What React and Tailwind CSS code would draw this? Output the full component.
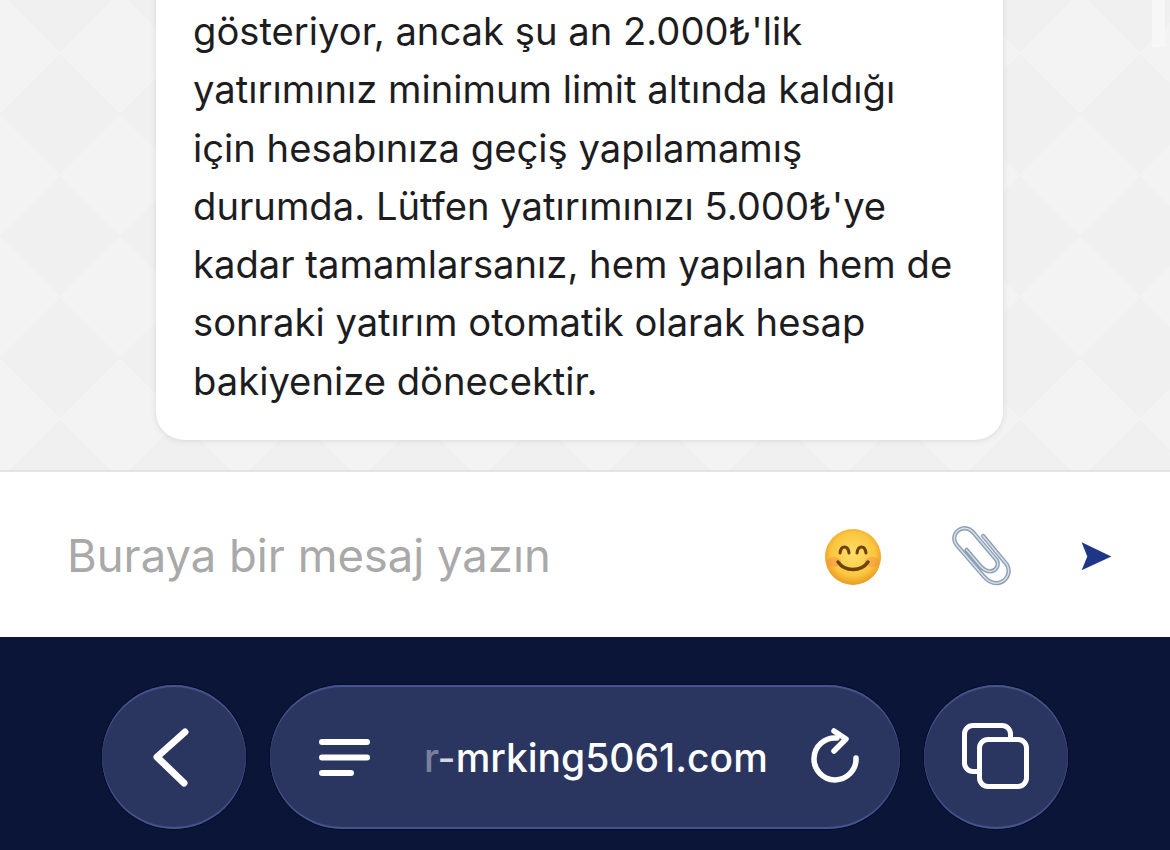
import React from 'react';

const LINES = [
  "gösteriyor, ancak şu an 2.000₺'lik",
  'yatırımınız minimum limit altında kaldığı',
  'için hesabınıza geçiş yapılamamış',
  "durumda. Lütfen yatırımınızı 5.000₺'ye",
  'kadar tamamlarsanız, hem yapılan hem de',
  'sonraki yatırım otomatik olarak hesap',
  'bakiyenize dönecektir.',
];

function Smiley() {
  return (
    <svg width="60" height="60" viewBox="0 0 60 60" className="shrink-0">
      <defs>
        <radialGradient id="face" cx="50%" cy="45%" r="55%">
          <stop offset="0%" stopColor="#ffdf6b" />
          <stop offset="70%" stopColor="#fcc63f" />
          <stop offset="100%" stopColor="#e89a22" />
        </radialGradient>
      </defs>
      <circle cx="30" cy="30" r="28" fill="url(#face)" />
      <ellipse cx="11" cy="35" rx="7" ry="5" fill="#f58a4a" opacity="0.45" />
      <ellipse cx="49" cy="35" rx="7" ry="5" fill="#f58a4a" opacity="0.45" />
      <path d="M17 26 C18 18 25 18 26 26" fill="none" stroke="#6b4210" strokeWidth="3" strokeLinecap="round" />
      <path d="M34 26 C35 18 42 18 43 26" fill="none" stroke="#6b4210" strokeWidth="3" strokeLinecap="round" />
      <path d="M15 35 C22 45 38 45 45 35" fill="none" stroke="#6b4210" strokeWidth="3.4" strokeLinecap="round" />
    </svg>
  );
}

function Paperclip() {
  const d = 'M610 108 L682 195 C695 220 680 245 655 250 C640 252 625 245 612 230 L530 135 C515 115 525 90 550 85 C565 83 575 90 585 103 L650 180 C660 195 650 213 632 215 C620 215 610 208 600 197 L560 150';
  return (
    <svg width="63" height="63" viewBox="510 75 190 190" className="shrink-0">
      <path d={d} fill="none" stroke="#8e9fb5" strokeWidth="13" strokeLinecap="round" strokeLinejoin="round" />
      <path d={d} fill="none" stroke="#d6dfe9" strokeWidth="4.5" strokeLinecap="round" strokeLinejoin="round" />
    </svg>
  );
}

function Composer() {
  return (
    <div className="flex h-[165px] shrink-0 items-center bg-white pl-[67px] pt-[4px]">
      <input
        readOnly
        placeholder="Buraya bir mesaj yazın"
        className="w-[756px] bg-transparent text-[45.400px] text-[#333] outline-none placeholder:text-[#a9a9a9]"
      />
      <div className="flex items-center">
        <Smiley />
        <div className="ml-[67px]">
          <Paperclip />
        </div>
        <svg width="33" height="33" viewBox="900 120 100 100" className="ml-[67px] shrink-0">
          <path d="M905 127 L995 170 L905 212 L922 170 Z" fill="#1f3688" />
        </svg>
      </div>
    </div>
  );
}

const glass = 'h-[144px] shrink-0 items-center bg-[#2a3560] shadow-[0_0_0_1px_#060c25,inset_0_2px_1px_#47568f,inset_0_-2px_1px_#47568f]';

function BrowserBar() {
  return (
    <div className="flex flex-1 gap-[24px] bg-[#0b1538] pl-[102px] pt-[48px]">
      <div className={`flex w-[144px] justify-center rounded-full ${glass}`}>
        <svg width="48" height="64" viewBox="150 725 48 64">
          <path d="M185 732 L157 757 L184 783" fill="none" stroke="#fff" strokeWidth="7" strokeLinecap="round" strokeLinejoin="round" />
        </svg>
      </div>

      <div className={`flex w-[630px] rounded-full pl-[49px] ${glass}`}>
        <svg width="52" height="40" viewBox="319 737 52 40" className="shrink-0">
          <path d="M322 742 H367 M322 757.500 H367 M322 773 H351" fill="none" stroke="#fff" strokeWidth="6" strokeLinecap="round" />
        </svg>
        <span className="ml-[53px] mt-[2px] font-['Inter',sans-serif] text-[39px] font-medium text-white">
          <span className="text-white/40">r</span>
          <span className="text-white/80">-</span>
          mrking5061.com
        </span>
        <svg width="50" height="60" viewBox="810 727 50 60" className="ml-[43px] shrink-0">
          <path d="M855 758 A21 21 0 1 1 836 738" fill="none" stroke="#fff" strokeWidth="5.500" strokeLinecap="round" />
          <path d="M833 731 L845 739 L833 751" fill="none" stroke="#fff" strokeWidth="5.500" strokeLinecap="round" strokeLinejoin="round" />
        </svg>
      </div>

      <div className={`flex w-[144px] justify-center rounded-full ${glass}`}>
        <svg width="72" height="72" viewBox="960 722 72 72">
          <path d="M977 772.500 H973 A8.500 8.500 0 0 1 964.500 764 V735 A8.500 8.500 0 0 1 973 726.500 H1002 A8.500 8.500 0 0 1 1010.500 735 V740" fill="none" stroke="#fff" strokeWidth="5" strokeLinecap="round" />
          <rect x="979.500" y="740.500" width="47" height="47" rx="8.500" fill="none" stroke="#fff" strokeWidth="5" />
        </svg>
      </div>
    </div>
  );
}

export default function App() {
  return (
    <div className="flex h-[850px] w-[1170px] flex-col overflow-hidden font-['Inter',sans-serif]">
      <div className="relative flex h-[472px] shrink-0 flex-col justify-end border-b-2 border-[#e4e4e4] bg-[linear-gradient(135deg,#f0f0f0_25%,transparent_25%),linear-gradient(225deg,#f0f0f0_25%,transparent_25%),linear-gradient(45deg,#f0f0f0_25%,transparent_25%),linear-gradient(315deg,#f0f0f0_25%,#f3f3f3_25%)] bg-size-[120px_122px] bg-position-[-60px_-8px] pb-[30px] pl-[156px]">
        <div className="absolute right-[5px] top-0 h-[47px] w-[13px] bg-[#f7f7f7]" />
        <div className="w-[847px] shrink-0 rounded-b-[28px] bg-white pb-[30px] pl-[37px] pt-[20px] text-[38.200px] leading-[58.300px] text-[#1d1d1f] shadow-[0_1px_6px_rgba(0,0,0,0.10)]">
          {LINES.map((line) => (
            <div key={line}>{line}</div>
          ))}
        </div>
      </div>
      <Composer />
      <BrowserBar />
    </div>
  );
}
